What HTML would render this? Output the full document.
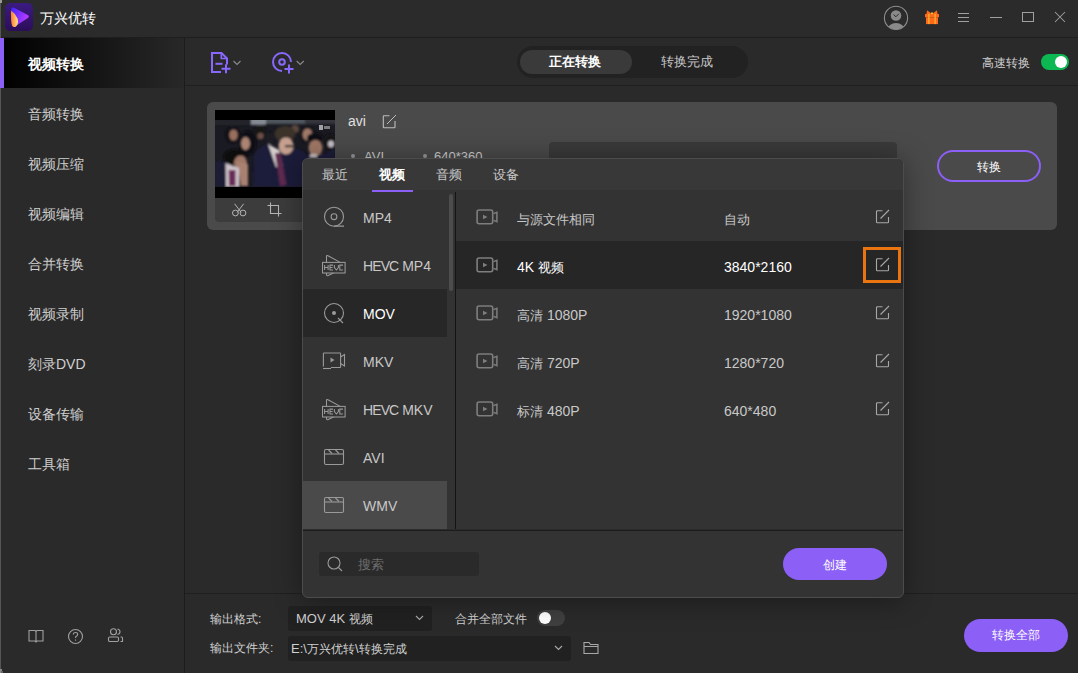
<!DOCTYPE html>
<html><head><meta charset="utf-8">
<style>
*{margin:0;padding:0;box-sizing:border-box}
html,body{width:1078px;height:673px;overflow:hidden;background:#2a2a2a;font-family:"Liberation Sans",sans-serif;color:#c8c8c8}
.a{position:absolute}
.t{position:absolute;white-space:nowrap;line-height:1}
#win{position:absolute;left:0;top:0;width:1078px;height:673px;background:#2a2a2a;overflow:hidden}
#title{left:0;top:0;width:1078px;height:38px;background:#2b2b2b;border-bottom:1px solid #1e1e1e}
#side{left:0;top:38px;width:185px;height:635px;background:#2a2a2a;border-right:1px solid #1c1c1c}
.mi{position:absolute;left:28px;font-size:14px;color:#cfcfcf;line-height:16px;height:16px;white-space:nowrap}
#tool{left:185px;top:38px;width:893px;height:48px;background:#2a2a2a;border-bottom:1px solid #1f1f1f}
#card{left:207px;top:102px;width:850px;height:128px;background:#4a4a4a;border-radius:6px}
#pop{left:302px;top:158px;width:602px;height:440px;background:#333;border:1px solid #4c4c4c;border-radius:6px;box-shadow:0 2px 28px rgba(0,0,0,.38);overflow:hidden}
#bottom{left:185px;top:593px;width:893px;height:80px;background:#2a2a2a;border-top:1px solid #1f1f1f}
.btn{position:absolute;background:#8c5ff6;border-radius:17px;color:#fff;font-size:13px;text-align:center}
</style></head><body>
<div id="win">
  <!-- TITLE BAR -->
  <div id="title" class="a">
    <svg class="a" style="left:5px;top:3px" width="28" height="28" viewBox="0 0 28 28">
      <defs>
        <linearGradient id="lgb" x1="0" y1="0" x2="0" y2="1"><stop offset="0" stop-color="#3b1b80"/><stop offset="1" stop-color="#2c0d5a"/></linearGradient>
        <linearGradient id="lgp" x1="0" y1="0.2" x2="1" y2="0.6"><stop offset="0" stop-color="#4326ff"/><stop offset="1" stop-color="#c23dff"/></linearGradient>
        <linearGradient id="lgo" x1="0" y1="0" x2="1" y2="0"><stop offset="0" stop-color="#ff7a2e"/><stop offset="1" stop-color="#ffe188"/></linearGradient>
      </defs>
      <rect x="0" y="0" width="28" height="28" rx="5.5" fill="url(#lgb)"/>
      <path d="M6.2 6.5 Q6.5 4 9 4.8 L22.8 12 Q24.8 13.5 22.8 15 L13 21.5 Q11 22.8 10 21 Z" fill="url(#lgp)"/>
      <path d="M6 7.5 Q10.5 10.5 12.5 15.5 Q14 20.5 11 23.5 Q8.5 25 7 22.5 Q5.7 18 6 7.5 Z" fill="url(#lgo)"/>
    </svg>
    
    <div class="t" style="left:40px;top:11px;font-size:14px;color:#fff">万兴优转</div>
    <!-- avatar -->
    <svg class="a" style="left:883px;top:5px" width="26" height="26" viewBox="0 0 26 26">
      <defs><clipPath id="cav"><circle cx="13" cy="12.9" r="11.5"/></clipPath></defs>
      <circle cx="13" cy="12.9" r="11.6" fill="none" stroke="#8e8e8e" stroke-width="1.1"/>
      <g clip-path="url(#cav)">
        <circle cx="13" cy="10.5" r="5.3" fill="#8a8a8a"/>
        <path d="M10.6 9.6 L12.9 11.8 L15.8 8.8" stroke="#2b2b2b" stroke-width="1" fill="none"/>
        <ellipse cx="13" cy="24.5" rx="8.5" ry="6.5" fill="#8a8a8a"/>
      </g>
    </svg>
    <!-- gift -->
    <svg class="a" style="left:924px;top:9px" width="16" height="16" viewBox="0 0 16 16">
      <path d="M3 1.2 L8 5 L2.5 5 Z M13 1.2 L8 5 L13.5 5 Z" fill="#ff6a1a"/>
      <rect x="1" y="5" width="14" height="3.3" fill="#ff6a1a"/>
      <rect x="2" y="8.3" width="12" height="6.8" fill="#ff6a1a"/>
      <rect x="4.4" y="5" width="1" height="10.1" fill="#ffc93a"/>
      <rect x="10.6" y="5" width="1" height="10.1" fill="#ffc93a"/>
      <rect x="7.1" y="3.4" width="1.8" height="1.8" fill="#ffc93a"/>
    </svg>
    <!-- menu -->
    <div class="a" style="left:958px;top:13px;width:11px;height:1px;background:#a0a0a0"></div>
    <div class="a" style="left:958px;top:17px;width:11px;height:1px;background:#a0a0a0"></div>
    <div class="a" style="left:958px;top:21px;width:11px;height:1px;background:#a0a0a0"></div>
    <!-- min -->
    <div class="a" style="left:990px;top:17px;width:12px;height:1px;background:#a0a0a0"></div>
    <!-- max -->
    <div class="a" style="left:1022px;top:12px;width:12px;height:10px;border:1px solid #a0a0a0"></div>
    <!-- close -->
    <svg class="a" style="left:1054px;top:11px" width="12" height="12" viewBox="0 0 12 12"><path d="M1 1 L11 11 M11 1 L1 11" stroke="#a0a0a0" stroke-width="1.05"/></svg>
  </div>

  <!-- SIDEBAR -->
  <div id="side" class="a">
    <div class="a" style="left:0;top:0;width:184px;height:50px;background:linear-gradient(90deg,#000 0%,#101010 40%,#282828 100%)"></div>
    <div class="a" style="left:0;top:0;width:4px;height:50px;background:#8c5ff6"></div>
    <div class="mi" style="top:18px;color:#fff;font-weight:bold">视频转换</div>
    <div class="mi" style="top:68px">音频转换</div>
    <div class="mi" style="top:118px">视频压缩</div>
    <div class="mi" style="top:168px">视频编辑</div>
    <div class="mi" style="top:218px">合并转换</div>
    <div class="mi" style="top:268px">视频录制</div>
    <div class="mi" style="top:318px">刻录DVD</div>
    <div class="mi" style="top:368px">设备传输</div>
    <div class="mi" style="top:418px">工具箱</div>
    <!-- bottom icons -->
    <svg class="a" style="left:27px;top:590px" width="18" height="16" viewBox="0 0 18 16">
      <path d="M2 2.5 L8 2.5 L9 3.5 L10 2.5 L16 2.5 L16 13 L10 13 L9 14 L8 13 L2 13 Z M9 3.5 L9 14" fill="none" stroke="#a0a0a0" stroke-width="1.1"/>
    </svg>
    <svg class="a" style="left:67px;top:590px" width="17" height="17" viewBox="0 0 17 17">
      <circle cx="8.5" cy="8.5" r="7" fill="none" stroke="#a0a0a0" stroke-width="1.1"/>
      <path d="M6.3 6.5 Q6.3 4.5 8.5 4.5 Q10.7 4.5 10.7 6.4 Q10.7 7.6 9.3 8.3 Q8.5 8.8 8.5 10" fill="none" stroke="#a0a0a0" stroke-width="1.1"/>
      <rect x="8" y="11.5" width="1.1" height="1.2" fill="#a0a0a0"/>
    </svg>
    <svg class="a" style="left:107px;top:589px" width="18" height="17" viewBox="0 0 18 17">
      <circle cx="6.5" cy="4.8" r="3" fill="none" stroke="#a0a0a0" stroke-width="1.1"/>
      <path d="M10.5 2 Q13 2.5 13 4.8 Q13 7 10.5 7.5" fill="none" stroke="#a0a0a0" stroke-width="1.1"/>
      <rect x="1.5" y="10" width="10" height="4.5" rx="1.2" fill="none" stroke="#a0a0a0" stroke-width="1.1"/>
      <path d="M13.5 10 L14.5 10 Q15.5 10 15.5 11 L15.5 14.5 L13.5 14.5" fill="none" stroke="#a0a0a0" stroke-width="1.1"/>
    </svg>
  </div>

  <!-- TOOLBAR -->
  <div id="tool" class="a">
    <svg class="a" style="left:20px;top:9px" width="40" height="30" viewBox="0 0 40 30">
      <path d="M16 25 L7 25 L7 6 L16.5 6 L22 11.5 L22 17.5" fill="none" stroke="#8a68ff" stroke-width="2"/>
      <path d="M16.3 6.5 L16.3 11.5 L21.5 11.5" fill="none" stroke="#8a68ff" stroke-width="1.6"/>
      <path d="M10.5 16.8 L17.5 16.8" stroke="#8a68ff" stroke-width="2"/>
      <path d="M16.5 21.8 L25.5 21.8 M21 17.3 L21 26.3" stroke="#8a68ff" stroke-width="2"/>
      <path d="M28.5 14 L32 17.5 L35.5 14" fill="none" stroke="#8a8a8a" stroke-width="1.1"/>
    </svg>
    <svg class="a" style="left:82px;top:9px" width="40" height="30" viewBox="0 0 40 30">
      <path d="M24 15 A9 9 0 1 0 15 24" fill="none" stroke="#8a68ff" stroke-width="2"/>
      <circle cx="15" cy="15" r="2.8" fill="none" stroke="#8a68ff" stroke-width="2"/>
      <path d="M17.5 22 L26.5 22 M22 17.5 L22 26.5" stroke="#8a68ff" stroke-width="2"/>
      <path d="M29.7 14 L33.2 17.5 L36.8 14" fill="none" stroke="#8a8a8a" stroke-width="1.1"/>
    </svg>
    <!-- segmented -->
    <div class="a" style="left:332px;top:8px;width:231px;height:32px;border-radius:16px;background:#222"></div>
    <div class="a" style="left:335px;top:12px;width:112px;height:24px;border-radius:12px;background:#3a3a3a"></div>
    <div class="t" style="left:364px;top:17px;font-size:13px;font-weight:bold;color:#fff">正在转换</div>
    <div class="t" style="left:476px;top:17px;font-size:13px;color:#c8c8c8">转换完成</div>
    <div class="t" style="left:797px;top:19px;font-size:12px;color:#d0d0d0">高速转换</div>
    <div class="a" style="left:856px;top:16px;width:28px;height:16px;border-radius:8px;background:#0cb852"></div>
    <div class="a" style="left:870px;top:18px;width:12px;height:12px;border-radius:50%;background:#fff"></div>
  </div>

  <!-- CARD -->
  <div id="card" class="a">
    <div class="a" style="left:8px;top:8px;width:120px;height:112px;border-radius:0 0 4px 4px;background:#3c3c3c;overflow:hidden">
      <div class="a" id="thumb" style="left:0;top:0;width:120px;height:88px;background:#000"></div>
      <svg class="a" style="left:0;top:10px" width="120" height="67" viewBox="0 0 120 67">
        <defs><filter id="bl" x="-10%" y="-10%" width="120%" height="120%"><feGaussianBlur stdDeviation="0.8"/></filter></defs>
        <rect width="120" height="67" fill="#1a1a22"/>
        <g filter="url(#bl)">
          <rect x="-2" y="-2" width="38" height="7" fill="#22232a"/>
          <rect x="36" y="-2" width="15" height="7" fill="#858a92"/>
          <rect x="51" y="-2" width="39" height="6" fill="#50545c"/>
          <rect x="90" y="-2" width="32" height="6" fill="#34363c"/>
          <!-- left woman -->
          <ellipse cx="17.5" cy="15" rx="7.5" ry="8" fill="#111115"/>
          <ellipse cx="18.5" cy="15" rx="4.2" ry="5.5" fill="#98705f"/>
          <!-- girl -->
          <ellipse cx="33" cy="23" rx="8.5" ry="12.5" fill="#0f0f13"/>
          <ellipse cx="30.5" cy="23.5" rx="4.5" ry="6.5" fill="#ab8473"/>
          <!-- back boy -->
          <ellipse cx="45" cy="13" rx="6.5" ry="7" fill="#141418"/>
          <ellipse cx="45.5" cy="16" rx="3.2" ry="3.3" fill="#6a5048"/>
          <ellipse cx="55" cy="18" rx="4" ry="6" fill="#1b1b24"/>
          <!-- back right girl -->
          <ellipse cx="92" cy="14" rx="7" ry="9" fill="#16161a"/>
          <ellipse cx="92.5" cy="14.5" rx="4.8" ry="6" fill="#a27a6a"/>
          <ellipse cx="80" cy="9" rx="4" ry="4" fill="#5a463e"/>
          <!-- navy suits -->
          <path d="M38 67 L39 36 Q42 28 52 24 L68 33 L80 28 Q88 30 92 35 L110 34 L120 28 L120 67 Z" fill="#1d1d3b"/>
          <path d="M0 67 L0 42 Q6 40 12 43 L25 50 L26 67 Z" fill="#1b1b36"/>
          <!-- far right person -->
          <ellipse cx="115" cy="22" rx="6" ry="8" fill="#141418"/>
          <ellipse cx="116" cy="24" rx="3" ry="3.5" fill="#c8c0c8"/>
          <!-- center guy -->
          <ellipse cx="70" cy="14" rx="10.5" ry="8" fill="#3a302a"/>
          <ellipse cx="71" cy="26" rx="7.5" ry="8.5" fill="#c6a090"/>
          <rect x="70" y="25" width="8" height="2.2" fill="#2a2424"/>
          <path d="M53 24 L64 30 L68 47 L61 47 Z" fill="#d5cccd"/>
          <path d="M60 33 L65.5 33 L71.5 65 L65 66 Z" fill="#5e2c50"/>
          <!-- right boy -->
          <ellipse cx="100" cy="18" rx="8" ry="5" fill="#0f0f12"/>
          <ellipse cx="100.5" cy="28" rx="7" ry="8" fill="#a07866"/>
          <rect x="95" y="34" width="7" height="3.5" fill="#c8c0c0"/>
          <!-- bottom-left boy -->
          <ellipse cx="20" cy="37" rx="11.5" ry="8" fill="#0b0b0e"/>
          <ellipse cx="25.5" cy="43" rx="6.5" ry="7.5" fill="#a07868"/>
          <path d="M22 42 L33 44 L33 66 L26 66 Z" fill="#a98170"/>
          <path d="M10.5 43 L24 48 L24 67 L11 67 Z" fill="#cdc2ca"/>
          <path d="M13.7 50 L20.5 50 L20.5 66 L14 66 Z" fill="#6a2c58"/>
        </g>
        <rect x="104" y="5" width="4" height="5" fill="#ddd" opacity="0.7"/>
        <rect x="109" y="6" width="6" height="3" fill="#ccc" opacity="0.55"/>
      </svg>
    </div>
    <svg class="a" style="left:24px;top:100px" width="17" height="16" viewBox="0 0 17 16">
      <circle cx="4.4" cy="11" r="2.9" fill="none" stroke="#b5b5b5" stroke-width="1"/>
      <circle cx="12" cy="11" r="2.9" fill="none" stroke="#b5b5b5" stroke-width="1"/>
      <path d="M3.6 1.8 L10.2 10.4 M12.6 1.8 L6.2 10.4" stroke="#b5b5b5" stroke-width="1"/>
    </svg>
    <svg class="a" style="left:60px;top:100px" width="15" height="15" viewBox="0 0 15 15">
      <path d="M3.5 0.5 L3.5 11.5 L14.5 11.5 M0.5 3.5 L11.5 3.5 L11.5 14.5" fill="none" stroke="#b5b5b5" stroke-width="1.1"/>
    </svg>
    <div class="t" style="left:141px;top:12px;font-size:14px;color:#e0e0e0">avi</div>
    <svg class="a" style="left:175px;top:12px" width="15" height="15" viewBox="0 0 15 15">
      <path d="M7.5 1.8 L2 1.8 Q1.3 1.8 1.3 2.5 L1.3 13.1 Q1.3 13.8 2 13.8 L12.3 13.8 Q13 13.8 13 13.1 L13 7" fill="none" stroke="#bdbdbd" stroke-width="1.1"/>
      <path d="M5 10 L14 1" stroke="#bdbdbd" stroke-width="1"/>
    </svg>
    <div class="a" style="left:144px;top:52px;width:4px;height:4px;border-radius:50%;background:#9a9a9a"></div>
    <div class="t" style="left:157px;top:48px;font-size:13px;color:#cfcfcf">AVI</div>
    <div class="a" style="left:216px;top:52px;width:4px;height:4px;border-radius:50%;background:#9a9a9a"></div>
    <div class="t" style="left:227px;top:48px;font-size:13px;color:#cfcfcf">640*360</div>
    <div class="a" style="left:342px;top:40px;width:348px;height:80px;border-radius:4px;background:#3a3a3a"></div>
    <div class="a" style="left:730px;top:48px;width:104px;height:32px;border-radius:16px;border:2px solid #8c5ff6"></div>
    <div class="t" style="left:770px;top:59px;font-size:12px;color:#fff">转换</div>
  </div>

  <!-- BOTTOM -->
  <div id="bottom" class="a">
    <div class="t" style="left:25px;top:19px;font-size:12px;color:#d0d0d0">输出格式:</div>
    <div class="a" style="left:103px;top:12px;width:144px;height:25px;border-radius:3px;background:#212121"></div>
    <div class="t" style="left:111px;top:18px;font-size:13px;color:#d0d0d0">MOV 4K <span style="font-size:12px">视频</span></div>
    <svg class="a" style="left:230px;top:21px" width="9" height="6" viewBox="0 0 9 6"><path d="M1 1 L4.5 4.5 L8 1" fill="none" stroke="#aaa" stroke-width="1.1"/></svg>
    <div class="t" style="left:270px;top:19px;font-size:12px;color:#d0d0d0">合并全部文件</div>
    <div class="a" style="left:352px;top:16px;width:28px;height:16px;border-radius:8px;background:#3f3f3f"></div>
    <div class="a" style="left:354px;top:18px;width:12px;height:12px;border-radius:50%;background:#fff"></div>
    <div class="t" style="left:25px;top:48px;font-size:12px;color:#d0d0d0">输出文件夹:</div>
    <div class="a" style="left:103px;top:42px;width:283px;height:25px;border-radius:3px;background:#212121"></div>
    <div class="t" style="left:106px;top:48px;font-size:13px;color:#d0d0d0">E:\<span style="font-size:12px">万兴优转</span>\<span style="font-size:12px">转换完成</span></div>
    <svg class="a" style="left:369px;top:51px" width="9" height="6" viewBox="0 0 9 6"><path d="M1 1 L4.5 4.5 L8 1" fill="none" stroke="#aaa" stroke-width="1.1"/></svg>
    <svg class="a" style="left:398px;top:47px" width="16" height="14" viewBox="0 0 16 14"><path d="M1 1.5 L6 1.5 L7.5 3.5 L15 3.5 L15 12.5 L1 12.5 Z M1 5.5 L15 5.5" fill="none" stroke="#a8a8a8" stroke-width="1.1"/></svg>
    <div class="btn" style="left:779px;top:25px;width:104px;height:33px;line-height:33px;font-size:12px">转换全部</div>
  </div>

  <!-- POPUP -->
  <div id="pop" class="a">
<div class="a" style="left:0;top:0;width:600px;height:31px;background:#383838"></div>
<div class="t" style="left:19px;top:9px;font-size:13px;color:#c8c8c8">最近</div>
<div class="t" style="left:76px;top:9px;font-size:13px;color:#fff;font-weight:bold">视频</div>
<div class="t" style="left:133px;top:9px;font-size:13px;color:#c8c8c8">音频</div>
<div class="t" style="left:190px;top:9px;font-size:13px;color:#c8c8c8">设备</div>
<div class="a" style="left:69px;top:31px;width:41px;height:2px;background:#8c5ff6"></div>
<div class="t" style="left:60px;top:51px;font-size:14px;line-height:16px;color:#c8c8c8">MP4</div>
<svg class="a" style="left:19px;top:46px" width="24" height="24" viewBox="0 0 24 24"><circle cx="12" cy="11.7" r="9.5" fill="none" stroke="#9a9a9a" stroke-width="1.1"/><circle cx="12" cy="11.7" r="2.9" fill="none" stroke="#9a9a9a" stroke-width="1.1"/><path d="M12 21.2 L22 21.2" stroke="#9a9a9a" stroke-width="1.2"/></svg>
<div class="t" style="left:60px;top:99px;font-size:14px;line-height:16px;color:#c8c8c8"><span style="letter-spacing:-0.9px">HEVC</span> MP4</div>
<svg class="a" style="left:17px;top:94px" width="28" height="24" viewBox="0 0 28 24"><path d="M6.5 9.4 L6.5 3.6 Q6.5 2 8 2.7 L20.2 9.4 M6.5 20 L6.5 21.6 Q6.7 23.2 8.2 22.5 L13.5 20" fill="none" stroke="#9a9a9a" stroke-width="1.05"/><rect x="2.5" y="9.4" width="22.6" height="10.6" fill="none" stroke="#9a9a9a" stroke-width="1.05"/><path d="M4.6 12 V17 M8.1 12 V17 M4.6 14.5 H8.1 M13 12.1 H10 V16.9 H13 M10 14.5 H12.6 M14.4 12 V14.6 L16.4 17 L18.4 14.6 V12 M23 12.1 H19.8 V16.9 H23" fill="none" stroke="#9a9a9a" stroke-width="1.05"/></svg>
<div class="a" style="left:0;top:130px;width:144px;height:48px;background:#272727;"></div>
<div class="t" style="left:60px;top:147px;font-size:14px;line-height:16px;color:#fff">MOV</div>
<svg class="a" style="left:19px;top:142px" width="24" height="24" viewBox="0 0 24 24"><circle cx="12" cy="12" r="9.5" fill="none" stroke="#9a9a9a" stroke-width="1.1"/><circle cx="12" cy="12" r="2" fill="#9a9a9a"/><path d="M16 17 L21 22" stroke="#9a9a9a" stroke-width="1.1"/></svg>
<div class="t" style="left:60px;top:195px;font-size:14px;line-height:16px;color:#c8c8c8">MKV</div>
<svg class="a" style="left:19px;top:193px" width="24" height="24" viewBox="0 0 24 24"><path d="M9 15.5 L18 15.5 Q18.6 15.5 18.6 15 L18.6 1.8 Q18.6 1 18 1 L2 1 Q1.4 1 1.4 1.8 L1.4 14.5" fill="none" stroke="#9a9a9a" stroke-width="1.1"/><path d="M1 16.5 L9 16.5" stroke="#9a9a9a" stroke-width="1.1"/><path d="M18.6 5 L22.5 2.5 L22.5 14 L18.6 11.5" fill="none" stroke="#9a9a9a" stroke-width="1.1"/><path d="M8.5 5.5 L12.5 8 L8.5 10.5 Z" fill="#9a9a9a"/></svg>
<div class="t" style="left:60px;top:243px;font-size:14px;line-height:16px;color:#c8c8c8"><span style="letter-spacing:-0.9px">HEVC</span> MKV</div>
<svg class="a" style="left:17px;top:238px" width="28" height="24" viewBox="0 0 28 24"><path d="M6.5 9.4 L6.5 3.6 Q6.5 2 8 2.7 L20.2 9.4 M6.5 20 L6.5 21.6 Q6.7 23.2 8.2 22.5 L13.5 20" fill="none" stroke="#9a9a9a" stroke-width="1.05"/><rect x="2.5" y="9.4" width="22.6" height="10.6" fill="none" stroke="#9a9a9a" stroke-width="1.05"/><path d="M4.6 12 V17 M8.1 12 V17 M4.6 14.5 H8.1 M13 12.1 H10 V16.9 H13 M10 14.5 H12.6 M14.4 12 V14.6 L16.4 17 L18.4 14.6 V12 M23 12.1 H19.8 V16.9 H23" fill="none" stroke="#9a9a9a" stroke-width="1.05"/></svg>
<div class="t" style="left:60px;top:291px;font-size:14px;line-height:16px;color:#c8c8c8">AVI</div>
<svg class="a" style="left:20px;top:289px" width="22" height="18" viewBox="0 0 22 18"><rect x="1.5" y="1.5" width="19" height="15" rx="1.5" fill="none" stroke="#9a9a9a" stroke-width="1.1"/><path d="M1.5 6 L20.5 6" stroke="#9a9a9a" stroke-width="1.1"/><path d="M5.5 2 L9 5.5 M12.5 2 L16 5.5" stroke="#9a9a9a" stroke-width="1.1"/></svg>
<div class="a" style="left:0;top:322px;width:144px;height:48px;background:#4a4a4a;"></div>
<div class="t" style="left:60px;top:339px;font-size:14px;line-height:16px;color:#c8c8c8">WMV</div>
<svg class="a" style="left:20px;top:337px" width="22" height="18" viewBox="0 0 22 18"><rect x="1.5" y="1.5" width="19" height="15" rx="1.5" fill="none" stroke="#9a9a9a" stroke-width="1.1"/><path d="M1.5 6 L20.5 6" stroke="#9a9a9a" stroke-width="1.1"/><path d="M5.5 2 L9 5.5 M12.5 2 L16 5.5" stroke="#9a9a9a" stroke-width="1.1"/></svg>
<div class="a" style="left:146px;top:35px;width:4px;height:97px;border-radius:2px;background:#4d4d4d"></div>
<div class="a" style="left:152px;top:33px;width:1px;height:338px;background:#141414"></div>
<svg class="a" style="left:172px;top:49px" width="24" height="18" viewBox="0 0 24 18"><rect x="2.1" y="1.95" width="15.6" height="13.8" rx="2" fill="none" stroke="#7e7e7e" stroke-width="1.6"/><path d="M18.6 5.6 L21.9 4.4 L21.9 13.6 L18.6 12.4" fill="none" stroke="#7e7e7e" stroke-width="1.5"/><path d="M8 6.8 L12.5 9.05 L8 11.3 Z" fill="#7e7e7e"/></svg>
<div class="t" style="left:214px;top:52px;font-size:14px;line-height:16px;color:#c8c8c8"><span style="font-size:13px">与源文件相同</span></div>
<div class="t" style="left:421px;top:52px;font-size:14px;line-height:16px;color:#c8c8c8"><span style="font-size:13px">自动</span></div>
<svg class="a" style="left:572px;top:50px" width="15" height="15" viewBox="0 0 15 15"><path d="M7.5 1.8 L2.3 1.8 Q1.5 1.8 1.5 2.6 L1.5 12.9 Q1.5 13.7 2.3 13.7 L12.7 13.7 Q13.5 13.7 13.5 12.9 L13.5 8" fill="none" stroke="#a8a8a8" stroke-width="1.1"/><path d="M5.5 9.5 L14 1" stroke="#a8a8a8" stroke-width="1.1"/></svg>
<div class="a" style="left:153px;top:82px;width:447px;height:48px;background:#262626"></div>
<svg class="a" style="left:172px;top:97px" width="24" height="18" viewBox="0 0 24 18"><rect x="2.1" y="1.95" width="15.6" height="13.8" rx="2" fill="none" stroke="#7e7e7e" stroke-width="1.6"/><path d="M18.6 5.6 L21.9 4.4 L21.9 13.6 L18.6 12.4" fill="none" stroke="#7e7e7e" stroke-width="1.5"/><path d="M8 6.8 L12.5 9.05 L8 11.3 Z" fill="#7e7e7e"/></svg>
<div class="t" style="left:214px;top:100px;font-size:14px;line-height:16px;color:#fff">4K <span style="font-size:13px">视频</span></div>
<div class="t" style="left:421px;top:100px;font-size:14px;line-height:16px;color:#fff">3840*2160</div>
<svg class="a" style="left:572px;top:98px" width="15" height="15" viewBox="0 0 15 15"><path d="M7.5 1.8 L2.3 1.8 Q1.5 1.8 1.5 2.6 L1.5 12.9 Q1.5 13.7 2.3 13.7 L12.7 13.7 Q13.5 13.7 13.5 12.9 L13.5 8" fill="none" stroke="#a8a8a8" stroke-width="1.1"/><path d="M5.5 9.5 L14 1" stroke="#a8a8a8" stroke-width="1.1"/></svg>
<svg class="a" style="left:172px;top:145px" width="24" height="18" viewBox="0 0 24 18"><rect x="2.1" y="1.95" width="15.6" height="13.8" rx="2" fill="none" stroke="#7e7e7e" stroke-width="1.6"/><path d="M18.6 5.6 L21.9 4.4 L21.9 13.6 L18.6 12.4" fill="none" stroke="#7e7e7e" stroke-width="1.5"/><path d="M8 6.8 L12.5 9.05 L8 11.3 Z" fill="#7e7e7e"/></svg>
<div class="t" style="left:214px;top:148px;font-size:14px;line-height:16px;color:#c8c8c8"><span style="font-size:13px">高清</span> 1080P</div>
<div class="t" style="left:421px;top:148px;font-size:14px;line-height:16px;color:#c8c8c8">1920*1080</div>
<svg class="a" style="left:572px;top:146px" width="15" height="15" viewBox="0 0 15 15"><path d="M7.5 1.8 L2.3 1.8 Q1.5 1.8 1.5 2.6 L1.5 12.9 Q1.5 13.7 2.3 13.7 L12.7 13.7 Q13.5 13.7 13.5 12.9 L13.5 8" fill="none" stroke="#a8a8a8" stroke-width="1.1"/><path d="M5.5 9.5 L14 1" stroke="#a8a8a8" stroke-width="1.1"/></svg>
<svg class="a" style="left:172px;top:193px" width="24" height="18" viewBox="0 0 24 18"><rect x="2.1" y="1.95" width="15.6" height="13.8" rx="2" fill="none" stroke="#7e7e7e" stroke-width="1.6"/><path d="M18.6 5.6 L21.9 4.4 L21.9 13.6 L18.6 12.4" fill="none" stroke="#7e7e7e" stroke-width="1.5"/><path d="M8 6.8 L12.5 9.05 L8 11.3 Z" fill="#7e7e7e"/></svg>
<div class="t" style="left:214px;top:196px;font-size:14px;line-height:16px;color:#c8c8c8"><span style="font-size:13px">高清</span> 720P</div>
<div class="t" style="left:421px;top:196px;font-size:14px;line-height:16px;color:#c8c8c8">1280*720</div>
<svg class="a" style="left:572px;top:194px" width="15" height="15" viewBox="0 0 15 15"><path d="M7.5 1.8 L2.3 1.8 Q1.5 1.8 1.5 2.6 L1.5 12.9 Q1.5 13.7 2.3 13.7 L12.7 13.7 Q13.5 13.7 13.5 12.9 L13.5 8" fill="none" stroke="#a8a8a8" stroke-width="1.1"/><path d="M5.5 9.5 L14 1" stroke="#a8a8a8" stroke-width="1.1"/></svg>
<svg class="a" style="left:172px;top:241px" width="24" height="18" viewBox="0 0 24 18"><rect x="2.1" y="1.95" width="15.6" height="13.8" rx="2" fill="none" stroke="#7e7e7e" stroke-width="1.6"/><path d="M18.6 5.6 L21.9 4.4 L21.9 13.6 L18.6 12.4" fill="none" stroke="#7e7e7e" stroke-width="1.5"/><path d="M8 6.8 L12.5 9.05 L8 11.3 Z" fill="#7e7e7e"/></svg>
<div class="t" style="left:214px;top:244px;font-size:14px;line-height:16px;color:#c8c8c8"><span style="font-size:13px">标清</span> 480P</div>
<div class="t" style="left:421px;top:244px;font-size:14px;line-height:16px;color:#c8c8c8">640*480</div>
<svg class="a" style="left:572px;top:242px" width="15" height="15" viewBox="0 0 15 15"><path d="M7.5 1.8 L2.3 1.8 Q1.5 1.8 1.5 2.6 L1.5 12.9 Q1.5 13.7 2.3 13.7 L12.7 13.7 Q13.5 13.7 13.5 12.9 L13.5 8" fill="none" stroke="#a8a8a8" stroke-width="1.1"/><path d="M5.5 9.5 L14 1" stroke="#a8a8a8" stroke-width="1.1"/></svg>
<div class="a" style="left:560px;top:88px;width:38px;height:36px;border:3px solid #ea740f"></div>
<div class="a" style="left:0;top:370px;width:600px;height:1px;background:#2c2c2c"></div>
<div class="a" style="left:0;top:371px;width:600px;height:1px;background:#1c1c1c"></div>
<div class="a" style="left:16px;top:393px;width:160px;height:24px;border-radius:3px;background:#2a2a2a"></div>
<svg class="a" style="left:24px;top:397px" width="17" height="17" viewBox="0 0 17 17"><circle cx="7" cy="7" r="6" fill="none" stroke="#9a9a9a" stroke-width="1.1"/><path d="M11.5 11.5 L15 15" stroke="#9a9a9a" stroke-width="1.1"/></svg>
<div class="t" style="left:55px;top:399px;font-size:13px;color:#6e6e6e">搜索</div>
<div class="btn" style="left:480px;top:389px;width:104px;height:32px;line-height:34px;font-size:12px">创建</div>
</div>

<div class="a" style="left:0;top:3px;width:1px;height:35px;background:#555"></div>
<div class="a" style="left:0;top:88px;width:1px;height:582px;background:#555"></div>
<div class="a" style="left:0;top:669px;width:2px;height:4px;background:#8a8a8a"></div>
<div class="a" style="left:1px;top:671px;width:2px;height:2px;background:#666"></div>
<div class="a" style="left:0;top:0;width:2px;height:3px;background:#9a9a9a"></div>
</div>
</body></html>
